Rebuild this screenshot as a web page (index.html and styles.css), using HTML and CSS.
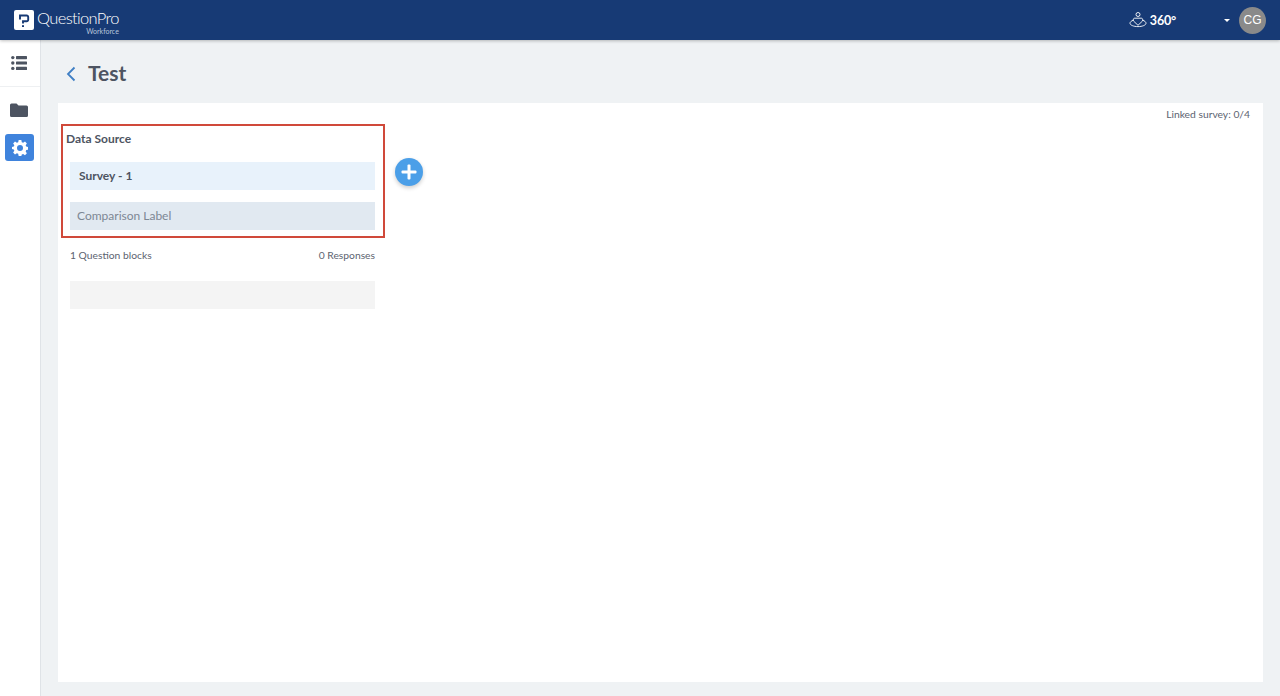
FILE: index.html
```html
<!DOCTYPE html>
<html lang="en">
<head>
  <meta charset="UTF-8">
  <title>Test</title>
  <link rel="stylesheet" href="styles.css">
</head>
<body>

  <header class="topbar">
    <div class="brand">
      <span class="brand-mark">
        <svg width="20" height="20" viewBox="0 0 20 20">
          <rect width="20" height="20" rx="2" fill="#fff"/>
          <path d="M6 9.500V5.500h6.700a1.500 1.500 0 0 1 1.500 1.500v2.800a1.500 1.500 0 0 1-1.500 1.500H9v2.200" fill="none" stroke="#173a75" stroke-width="1.900"/>
          <rect x="8" y="15.200" width="2" height="1.800" fill="#173a75"/>
        </svg>
      </span>
      <div class="brand-text">
        <span class="brand-name">QuestionPro</span>
        <span class="brand-sub">Workforce</span>
      </div>
    </div>
    <div class="topbar-right">
      <div class="product">
        <svg width="18" height="17" viewBox="0 0 18 17" fill="none" stroke="#fff" stroke-width="0.900">
          <circle cx="9" cy="2.500" r="2"/>
          <path d="M5.500 6.200h7c1 0 1.700 1.600 1 2.800L9 13.300 4.500 9c-.7-1.200 0-2.800 1-2.800z"/>
          <path d="M4.300 8.200C2.200 9 1 10 1 11.200c0 1.900 3.600 3.400 8 3.400s8-1.500 8-3.400c0-1.200-1.200-2.200-3.300-3"/>
        </svg>
        <span>360°</span>
      </div>
      <span class="caret"></span>
      <span class="avatar">CG</span>
    </div>
  </header>

  <div class="layout">
    <nav class="sidebar">
      <a class="side-item side-list">
        <svg width="16" height="16" viewBox="0 0 16 16" fill="#4d5461">
          <circle cx="1.800" cy="2.600" r="1.700"/>
          <circle cx="1.800" cy="8" r="1.700"/>
          <circle cx="1.800" cy="13.400" r="1.700"/>
          <rect x="5" y="1" width="11" height="3.200" rx="0.600"/>
          <rect x="5" y="6.400" width="11" height="3.200" rx="0.600"/>
          <rect x="5" y="11.800" width="11" height="3.200" rx="0.600"/>
        </svg>
      </a>
      <a class="side-item side-folder">
        <svg width="18" height="14" viewBox="0 0 18 14" fill="#4d5461">
          <path d="M1.500 0.500h5l2 2h8a1.500 1.500 0 0 1 1.500 1.500v8.500a1.500 1.500 0 0 1-1.500 1.500h-15A1.500 1.500 0 0 1 0 12.500V2A1.500 1.500 0 0 1 1.500 .5z"/>
        </svg>
      </a>
      <a class="side-item side-active">
        <svg width="16" height="16" viewBox="0 0 24 24">
          <path fill="#fff" fill-rule="evenodd" d="M10 0h4l.7 3.300 2 .8L19.500 2.300l2.800 2.800-1.800 2.800.8 2 3.700.7v3.800l-3.700.7-.8 2 1.800 2.800-2.800 2.800-2.800-1.800-2 .8L14 24h-4l-.7-3.300-2-.8-2.800 1.800-2.800-2.800 1.800-2.800-.8-2L0 13.400V10.600l2.700-.7.8-2-1.800-2.800 2.800-2.800 2.800 1.800 2-.8zM12 7.500a4.500 4.500 0 1 0 0 9 4.500 4.500 0 0 0 0-9z"/>
        </svg>
      </a>
    </nav>

    <main class="content">
      <div class="page-title">
        <svg width="12" height="16" viewBox="0 0 12 16" fill="none" stroke="#3f7fc4" stroke-width="1.800">
          <path d="M9.500 1.500 3 8l6.500 6.500"/>
        </svg>
        <h1>Test</h1>
      </div>

      <section class="card">
        <p class="linked">Linked survey: 0/4</p>
        <div class="source-row">
          <div class="source-col">
            <div class="source-box">
              <h2>Data Source</h2>
              <div class="survey-name">Survey - 1</div>
              <div class="compare-label">Comparison Label</div>
            </div>
            <div class="source-meta">
              <span>1 Question blocks</span>
              <span>0 Responses</span>
            </div>
            <div class="source-empty"></div>
          </div>
          <button class="add-btn">
            <svg width="16" height="16" viewBox="0 0 16 16" fill="#fff">
              <rect x="6.500" y="0.500" width="3" height="15" rx="1"/>
              <rect x="0.500" y="6.500" width="15" height="3" rx="1"/>
            </svg>
          </button>
        </div>
      </section>
    </main>
  </div>

</body>
</html>
```

FILE: styles.css
```css
* {
  box-sizing: border-box;
}

body {
  margin: 0;
  height: 696px;
  overflow: hidden;
  font-family: 'Lato', 'Noto Sans', sans-serif;
  background: #eff2f4;
  color: #4d5461;
}

.topbar {
  height: 40px;
  background: #173a75;
  box-shadow: 0 1px 3px rgba(0, 0, 0, 0.25);
  display: flex;
  justify-content: space-between;
  align-items: center;
  padding: 0 14px;
  position: relative;
}

.brand {
  display: flex;
  align-items: center;
  gap: 3px;
}

.brand-mark {
  display: flex;
}

.brand-text {
  display: flex;
  flex-direction: column;
  color: #fff;
  margin-top: 3px;
}

.brand-name {
  font-size: 16.500px;
  font-weight: 300;
  line-height: 18px;
  letter-spacing: -0.650px;
}

.brand-sub {
  font-size: 7px;
  line-height: 7px;
  margin-top: 1px;
  text-align: right;
  color: #b9c6dc;
}

.topbar-right {
  display: flex;
  align-items: center;
}

.product {
  display: flex;
  align-items: center;
  gap: 3px;
  color: #fff;
  font-size: 12.500px;
  font-weight: 700;
  letter-spacing: -0.200px;
}

.caret {
  width: 0;
  height: 0;
  margin-left: 48px;
  border-left: 3.500px solid transparent;
  border-right: 3.500px solid transparent;
  border-top: 3.500px solid #fff;
}

.avatar {
  width: 27px;
  height: 27px;
  margin-left: 9px;
  border-radius: 50%;
  background: #8a8a8a;
  color: #fff;
  font-family: 'Liberation Sans', sans-serif;
  font-size: 12px;
  display: flex;
  align-items: center;
  justify-content: center;
}

.layout {
  display: flex;
  height: 656px;
}

.sidebar {
  width: 41px;
  background: #fff;
  border-right: 1px solid #dfe3e7;
  flex-shrink: 0;
}

.side-item {
  display: flex;
  align-items: center;
  justify-content: center;
}

.side-list {
  height: 47px;
  padding-right: 3px;
  border-bottom: 1px solid #eef0f2;
}

.side-folder {
  height: 46px;
  padding-right: 3px;
}

.side-active {
  width: 29px;
  height: 27px;
  margin: 1px 0 0 5px;
  background: #3f83dc;
  border-radius: 3px;
}

.content {
  flex: 1;
  padding: 0 17px 14px;
  display: flex;
  flex-direction: column;
}

.page-title {
  height: 63px;
  display: flex;
  align-items: center;
  gap: 11px;
  padding-left: 7px;
  padding-top: 5px;
}

.page-title h1 {
  margin: -4px 0 0;
  font-size: 21px;
  font-weight: 700;
  color: #4d5461;
}

.card {
  flex: 1;
  background: #fff;
  padding: 4px 13px 0 3px;
}

.linked {
  margin: 0;
  text-align: right;
  font-size: 10.300px;
  line-height: 15px;
  color: #5c6370;
}

.source-row {
  display: flex;
  align-items: flex-start;
  margin-top: 2px;
}

.source-col {
  width: 324px;
}

.source-box {
  height: 114px;
  border: 2px solid #d0493a;
  padding: 4px 8px 0 7px;
}

.source-box h2 {
  margin: 0 0 10px -4px;
  font-size: 12px;
  line-height: 18px;
  font-weight: 700;
  height: 22px;
  color: #4d5461;
}

.survey-name {
  height: 28px;
  line-height: 27px;
  margin-bottom: 12px;
  padding-left: 9px;
  background: #e8f2fb;
  font-size: 12px;
  font-weight: 700;
}

.compare-label {
  height: 28px;
  line-height: 27px;
  padding-left: 7px;
  background: #e1e9f1;
  font-size: 12px;
  color: #7d8794;
}

.source-meta {
  display: flex;
  justify-content: space-between;
  padding: 0 10px 0 9px;
  margin-top: 10px;
  font-size: 10.300px;
  line-height: 15px;
  color: #5c6370;
}

.source-empty {
  height: 28px;
  margin: 18px 10px 0 9px;
  background: #f4f4f4;
}

.add-btn {
  width: 28px;
  height: 28px;
  margin: 34px 0 0 10px;
  padding: 0;
  border: none;
  border-radius: 50%;
  background: #4b9fe8;
  box-shadow: 0 2px 4px rgba(0, 0, 0, 0.2);
  display: flex;
  align-items: center;
  justify-content: center;
}
```
